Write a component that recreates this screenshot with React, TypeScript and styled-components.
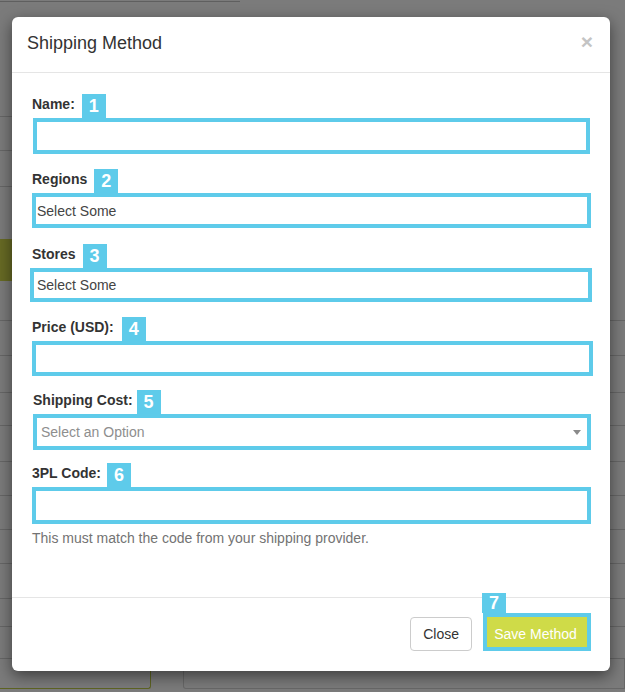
import React from 'react';
import styled, { createGlobalStyle } from 'styled-components';

const GlobalStyle = createGlobalStyle`
  html, body {
    margin: 0;
    padding: 0;
  }
  body {
    font-family: "Liberation Sans", Arial, sans-serif;
    background: #7b7b7b;
  }
`;

const BLUE = '#5ecbea';

// dimmed page behind the modal
const Page = styled.div`
  position: relative;
  width: 625px;
  height: 692px;
  overflow: hidden;
  background: #7b7b7b;
`;

const Backdrop = styled.div`
  display: flex;
  flex-direction: column;
  height: 100%;
`;

const TopStrip = styled.div`
  width: 240px;
  height: 1px;
  border-bottom: 1px solid #5f5f5f;
`;

const Row = styled.div<{ $h: number }>`
  display: flex;
  height: ${(p) => p.$h}px;
  flex-shrink: 0;
`;

const RowMain = styled.div<{ $olive?: boolean; $line?: boolean }>`
  flex: 1;
  background: ${(p) => (p.$olive ? '#676a24' : 'transparent')};
  border-bottom: 1px solid ${(p) => (p.$line ? '#666666' : 'transparent')};
`;

const RowEdge = styled.div<{ $line?: boolean }>`
  width: 15px;
  border-bottom: 1px solid ${(p) => (p.$line ? '#666666' : 'transparent')};
`;

const BottomBoxes = styled.div`
  display: flex;
  gap: 32px;
  height: 30px;
`;

const OliveBox = styled.div`
  width: 150px;
  border: 1px solid #5d6322;
  border-top: none;
  border-left: none;
  border-radius: 0 0 3px 0;
`;

const GreyBox = styled.div`
  flex: 1;
  border: 1px solid #686868;
  border-top: none;
  border-radius: 0 0 0 3px;
`;

// modal
const Modal = styled.div`
  position: absolute;
  top: 17px;
  left: 12px;
  width: 598px;
  height: 654px;
  background: #fff;
  border-radius: 6px;
  box-shadow: 0 5px 15px rgba(0, 0, 0, 0.5);
  display: flex;
  flex-direction: column;
`;

const Header = styled.div`
  height: 56px;
  box-sizing: border-box;
  padding: 0 17px 2px 15px;
  display: flex;
  align-items: center;
  justify-content: space-between;
  border-bottom: 1px solid #e5e5e5;
`;

const Title = styled.h4`
  margin: 0;
  font-size: 18px;
  font-weight: normal;
  color: #333;
`;

const CloseX = styled.span`
  font-size: 21px;
  font-weight: bold;
  color: #c4c4c4;
  line-height: 1;
  margin-top: -4px;
`;

const Body = styled.div`
  flex: 1;
  padding: 21px 20px 0 20px;
`;

const Field = styled.div<{ $gap: number }>`
  margin-bottom: ${(p) => p.$gap}px;
`;

const LabelRow = styled.div`
  display: flex;
  align-items: center;
  height: 24px;
`;

const Label = styled.label<{ $ml: number; $gap: number }>`
  font-size: 14px;
  font-weight: bold;
  color: #333;
  margin-left: ${(p) => p.$ml}px;
  margin-right: ${(p) => p.$gap}px;
  margin-top: -4px;
`;

const Badge = styled.span`
  width: 24px;
  height: 24px;
  background: ${BLUE};
  color: #fff;
  font-size: 18px;
  font-weight: bold;
  display: flex;
  align-items: center;
  justify-content: center;
`;

const Box = styled.div<{ $h: number; $ml: number; $mr: number; $pl: number }>`
  height: ${(p) => p.$h}px;
  box-sizing: border-box;
  margin-left: ${(p) => p.$ml}px;
  margin-right: ${(p) => p.$mr}px;
  border: 4px solid ${BLUE};
  background: #fff;
  display: flex;
  align-items: center;
  justify-content: space-between;
  padding: 0 6px 0 ${(p) => p.$pl}px;
  font-size: 14px;
`;

const Placeholder = styled.span<{ $muted?: boolean }>`
  color: ${(p) => (p.$muted ? '#8e8e8e' : '#444')};
`;

const Caret = styled.span`
  width: 0;
  height: 0;
  border-left: 4px solid transparent;
  border-right: 4px solid transparent;
  border-top: 5px solid #8a8a8a;
`;

const Help = styled.p`
  margin: -7px 0 0 0;
  font-size: 14px;
  color: #737373;
`;

const Footer = styled.div`
  height: 74px;
  box-sizing: border-box;
  border-top: 1px solid #e5e5e5;
  padding: 0 19px 20px 0;
  display: flex;
  justify-content: flex-end;
  align-items: flex-end;
  gap: 11px;
`;

const Button = styled.button`
  height: 34px;
  padding: 0 12px;
  background: #fff;
  border: 1px solid #ccc;
  border-radius: 4px;
  font-family: inherit;
  font-size: 14px;
  color: #333;
`;

const SaveWrap = styled.div`
  position: relative;
  border: 4px solid ${BLUE};
  display: flex;
`;

const SaveButton = styled.button`
  width: 100px;
  height: 30px;
  border: none;
  background: #cfdb48;
  color: #fff;
  font-family: inherit;
  font-size: 14px;
  padding: 3px 3px 0 0;
`;

const FloatBadge = styled(Badge)`
  position: absolute;
  top: -24px;
  left: -5px;
  height: 20px;
`;

const rows = [
  { h: 115, line: true },
  { h: 34, line: true },
  { h: 36, line: true },
  { h: 52 },
  { h: 42, olive: true },
  { h: 40, line: true, right: true },
  { h: 35, line: true, right: true },
  { h: 37, line: true, right: true },
  { h: 33, line: true, right: true },
  { h: 36, line: true, right: true },
  { h: 34, line: true, right: true },
  { h: 34, line: true, right: true },
  { h: 34, line: true, right: true },
  { h: 35, line: true, right: true },
  { h: 28, line: true, right: true },
  { h: 32, line: true, right: true },
];

const fields = [
  { label: 'Name:', n: 1, gap: 7, h: 36, ml: 1, mr: 0, pl: 1, after: 15 },
  { label: 'Regions', n: 2, gap: 7, h: 35, ml: 0, mr: -1, pl: 1, text: 'Select Some', after: 16 },
  { label: 'Stores', n: 3, gap: 7, h: 34, ml: -2, mr: -2, pl: 3, text: 'Select Some', after: 15 },
  { label: 'Price (USD):', n: 4, gap: 8, h: 35, ml: 0, mr: -3, pl: 1, after: 14 },
  { label: 'Shipping Cost:', n: 5, gap: 4, h: 36, ml: 1, mr: -1, pl: 4, text: 'Select an Option', muted: true, caret: true, after: 13 },
  { label: '3PL Code:', n: 6, gap: 6, h: 37, ml: 0, mr: -1, pl: 1, after: 13 },
];

export default function App() {
  return (
    <>
      <GlobalStyle />
      <Page>
        <Backdrop>
          <TopStrip />
          {rows.map((r, i) => (
            <Row key={i} $h={r.h}>
              <RowMain $olive={r.olive} $line={r.line} />
              <RowEdge $line={r.right} />
            </Row>
          ))}
          <BottomBoxes>
            <OliveBox />
            <GreyBox />
          </BottomBoxes>
        </Backdrop>

        <Modal>
          <Header>
            <Title>Shipping Method</Title>
            <CloseX>×</CloseX>
          </Header>
          <Body>
            {fields.map((f) => (
              <Field key={f.n} $gap={f.after}>
                <LabelRow>
                  <Label $ml={f.n === 5 ? 1 : 0} $gap={f.gap}>{f.label}</Label>
                  <Badge>{f.n}</Badge>
                </LabelRow>
                <Box $h={f.h} $ml={f.ml} $mr={f.mr} $pl={f.pl}>
                  <Placeholder $muted={f.muted}>{f.text}</Placeholder>
                  {f.caret && <Caret />}
                </Box>
              </Field>
            ))}
            <Help>This must match the code from your shipping provider.</Help>
          </Body>
          <Footer>
            <Button>Close</Button>
            <SaveWrap>
              <FloatBadge>7</FloatBadge>
              <SaveButton>Save Method</SaveButton>
            </SaveWrap>
          </Footer>
        </Modal>
      </Page>
    </>
  );
}
